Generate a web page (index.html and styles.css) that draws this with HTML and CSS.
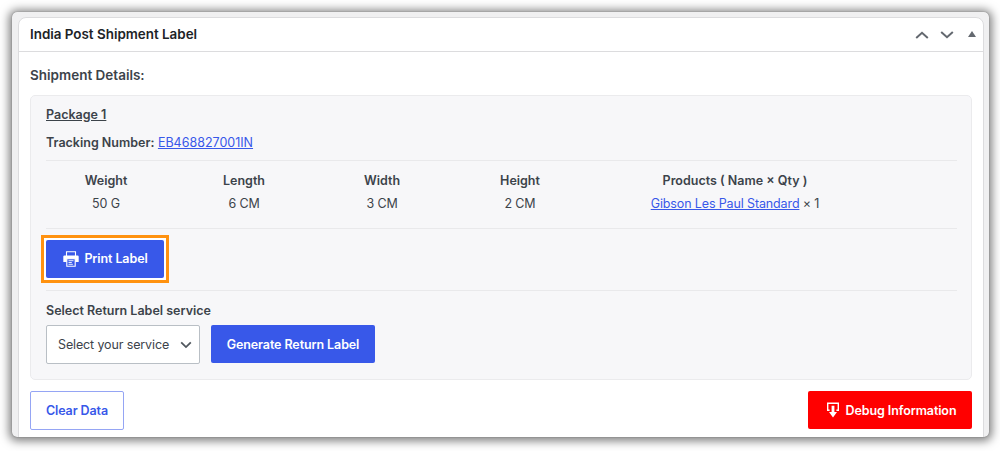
FILE: index.html
```html
<!DOCTYPE html>
<html lang="en">
<head>
    <meta charset="UTF-8">
    <meta name="viewport" content="width=device-width, initial-scale=1.0">
    <title>India Post Shipment Label</title>
    <link rel="stylesheet" href="styles.css">
</head>
<body>
    <div class="window">
        <div class="metabox">
            <!-- Metabox Header -->
            <div class="metabox-header">
                <h2>India Post Shipment Label</h2>
                <div class="handle-actions">
                    <svg class="handle-up" width="14" height="8" viewBox="0 0 14 8"><path d="M1.2 7 L7 1.8 L12.8 7"/></svg>
                    <svg class="handle-down" width="14" height="8" viewBox="0 0 14 8"><path d="M1.2 1 L7 6.2 L12.8 1"/></svg>
                    <svg class="handle-toggle" width="8" height="6" viewBox="0 0 8 6"><path d="M4 0 L8 6 H0 Z"/></svg>
                </div>
            </div>

            <!-- Metabox Content -->
            <div class="metabox-content">
                <h3>Shipment Details:</h3>

                <div class="package">
                    <div class="package-title"><span>Package 1</span></div>
                    <div class="tracking"><strong>Tracking Number:</strong> <a href="#">EB468827001IN</a></div>

                    <div class="package-details">
                        <div class="detail"><strong>Weight</strong><span>50 G</span></div>
                        <div class="detail"><strong>Length</strong><span>6 CM</span></div>
                        <div class="detail"><strong>Width</strong><span>3 CM</span></div>
                        <div class="detail"><strong>Height</strong><span>2 CM</span></div>
                        <div class="detail"><strong>Products ( Name × Qty )</strong><span><a href="#">Gibson Les Paul Standard</a> × 1</span></div>
                    </div>

                    <div class="print-row">
                        <div class="highlight">
                            <button class="btn btn-print">
                                <svg width="16" height="16" viewBox="0 0 16 16">
                                    <path d="M3.5 5 V0.7 H12.5 V5" fill="none" stroke="#fff" stroke-width="1.1"/>
                                    <path d="M1.5 4.6 H14.5 Q15.7 4.6 15.7 5.8 V11 H0.3 V5.8 Q0.3 4.6 1.5 4.6 Z" fill="#fff"/>
                                    <path d="M3.8 7.8 H12.2 V15.3 H3.8 Z" fill="#3858e9" stroke="#fff" stroke-width="1.1"/>
                                    <path d="M5.5 9.7 H10.5 M5.5 11.5 H8.8 M5.5 13.3 H9.8" fill="none" stroke="#fff" stroke-width="0.9"/>
                                </svg>
                                Print Label
                            </button>
                        </div>
                    </div>

                    <div class="return-label">
                        <strong>Select Return Label service</strong>
                        <div class="return-controls">
                            <div class="select">
                                Select your service
                                <svg width="12" height="8" viewBox="0 0 12 8"><path d="M1.2 1.4 L6 6.1 L10.8 1.4"/></svg>
                            </div>
                            <button class="btn btn-generate">Generate Return Label</button>
                        </div>
                    </div>
                </div>

                <!-- Footer Buttons -->
                <div class="footer-actions">
                    <button class="btn btn-clear">Clear Data</button>
                    <button class="btn btn-debug">
                        <svg width="12" height="16" viewBox="0 0 12 16">
                            <path d="M2.6 8.2 H0.7 V1.2 H11.3 V8.2 H9.4" fill="none" stroke="#fff" stroke-width="1.4"/>
                            <path d="M4.6 3.8 H7.4 V10 H10 L6 15.4 L2 10 H4.6 Z" fill="#fff"/>
                        </svg>
                        Debug Information
                    </button>
                </div>
            </div>
        </div>
    </div>
</body>
</html>
```
FILE: styles.css
```css
/* General Styles */
* {
    box-sizing: border-box;
}

body {
    margin: 0;
    padding: 12px 11px 0 12px;
    height: 451px;
    overflow: hidden;
    background-color: #fff;
    font-family: Inter, "Liberation Sans", sans-serif;
    font-size: 12.5px;
    line-height: 20px;
    color: #3c434a;
}

h2, h3 {
    margin: 0;
}

strong {
    font-weight: 600;
}

a {
    color: #3858e9;
    text-decoration: underline;
}

svg {
    display: block;
}

/* Window with drop shadow */
.window {
    height: 425px;
    padding: 5px 5px 0 6px;
    overflow: hidden;
    background-color: #f0f0f1;
    border-radius: 5px;
    box-shadow: 0 0 1px rgba(0, 0, 0, 0.5), 0 1px 10px 3px rgba(0, 0, 0, 0.5);
}

.metabox {
    height: 440px;
    background-color: #fff;
    border: 1px solid #dcdcde;
    border-radius: 8px;
}

/* Header */
.metabox-header {
    display: flex;
    justify-content: space-between;
    align-items: center;
    height: 34px;
    padding: 0 7px 1px 11px;
    border-bottom: 1px solid #dcdcde;
}

.metabox-header h2 {
    font-size: 13.4px;
    font-weight: 600;
    color: #1d2327;
}

.handle-actions {
    display: flex;
    align-items: center;
    gap: 11px;
    padding-top: 1px;
}

.handle-up, .handle-down {
    fill: none;
    stroke: #646970;
    stroke-width: 2;
}

.handle-toggle {
    margin: 0 0 1px 3px;
    fill: #646970;
}

/* Content */
.metabox-content {
    padding: 13px 11px 0;
}

.metabox-content h3 {
    font-size: 13.5px;
    font-weight: 600;
}

.package {
    height: 285px;
    margin-top: 10px;
    padding: 9px 14px 0 15px;
    background-color: #f7f7f9;
    border: 1px solid #ebebed;
    border-radius: 5px;
}

.package-title {
    font-weight: 600;
    text-decoration: underline;
}

.tracking {
    height: 35px;
    padding-top: 8px;
}

.package-details {
    display: grid;
    grid-template-columns: 120px 120px 120px 120px 274px;
    column-gap: 18px;
    height: 69px;
    padding-top: 10px;
    border-top: 1px solid #e9e9eb;
    border-bottom: 1px solid #e9e9eb;
}

.detail {
    display: flex;
    flex-direction: column;
    gap: 3px;
    text-align: center;
}

.detail span {
    letter-spacing: -0.13px;
}

/* Buttons */
.btn {
    display: flex;
    justify-content: center;
    align-items: center;
    height: 38px;
    padding: 0;
    border: none;
    border-radius: 2px;
    background-color: #3858e9;
    color: #fff;
    font-family: inherit;
    font-size: 12.5px;
    font-weight: 600;
    letter-spacing: -0.1px;
}

.print-row {
    height: 61px;
    margin-left: -5px;
    padding-top: 6px;
}

.highlight {
    width: 128px;
    padding: 2px;
    background-color: #fff;
    border: 3px solid #ff9210;
}

.btn-print {
    width: 118px;
    gap: 5px;
    padding: 0 0 1px 1px;
}

.return-label {
    padding-top: 10px;
    border-top: 1px solid #e9e9eb;
}

.return-controls {
    display: flex;
    gap: 11px;
    margin-top: 4px;
}

.select {
    display: flex;
    justify-content: space-between;
    align-items: center;
    width: 154px;
    height: 39px;
    padding: 0 7px 0 11px;
    background-color: #fff;
    border: 1px solid #b9bfc5;
    border-radius: 2px;
    letter-spacing: -0.13px;
}

.select svg {
    fill: none;
    stroke: #50575e;
    stroke-width: 1.8;
}

.btn-generate {
    width: 164px;
}

/* Footer */
.footer-actions {
    display: flex;
    justify-content: space-between;
    margin-top: 11px;
}

.btn-clear {
    width: 94px;
    height: 39px;
    padding-bottom: 1px;
    background-color: #fff;
    border: 1px solid #95a5f4;
    color: #3858e9;
}

.btn-debug {
    width: 164px;
    gap: 7px;
    padding-left: 3px;
    background-color: #f00;
}
```
